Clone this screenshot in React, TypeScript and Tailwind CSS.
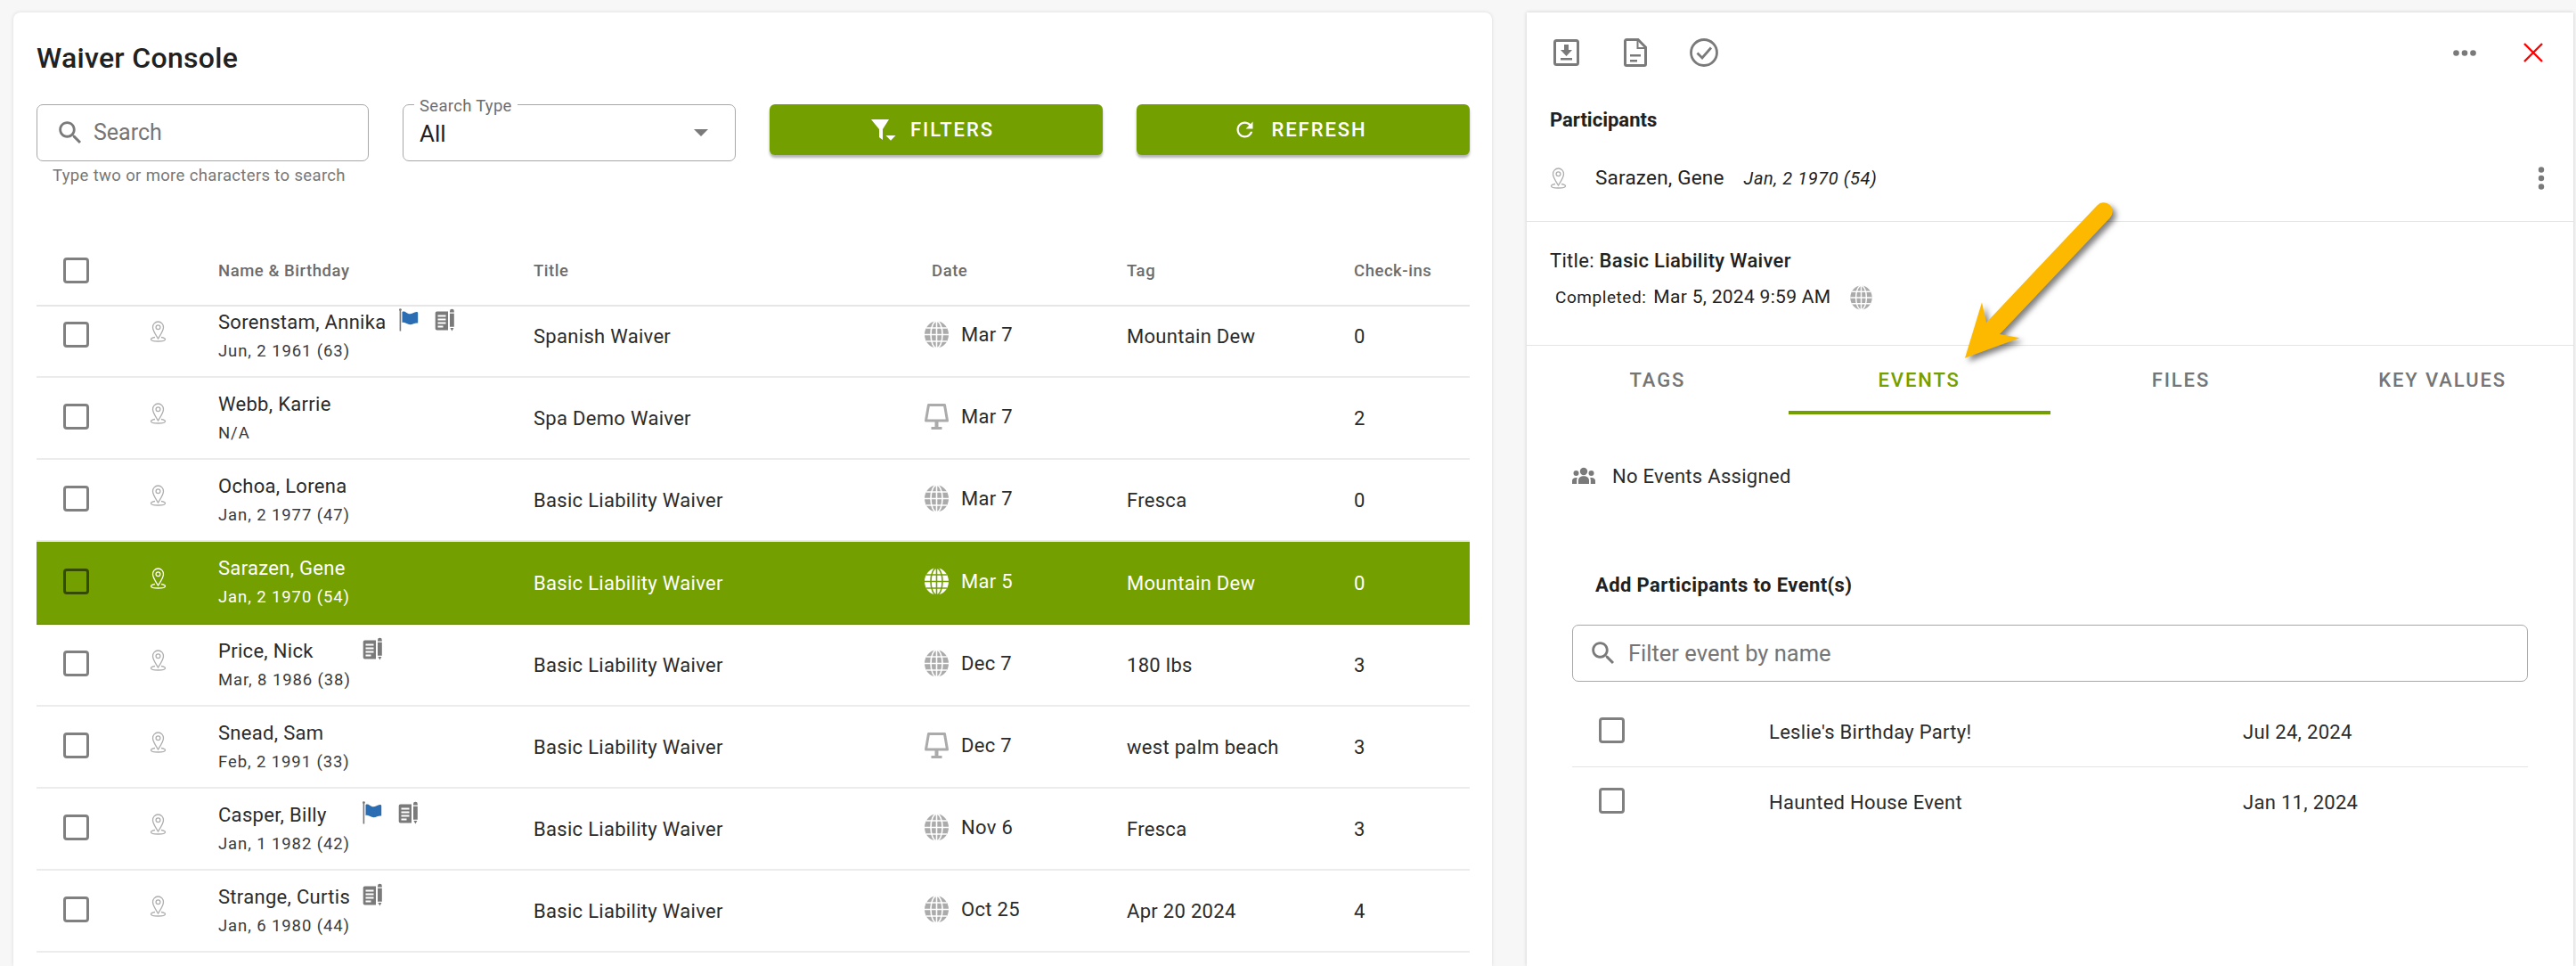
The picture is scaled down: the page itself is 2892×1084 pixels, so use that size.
import type { ReactNode } from "react";

const GRAY = "#7a7a7a";

function Checkbox({ dark }: { dark?: boolean }) {
  return (
    <div
      className={`h-[29px] w-[29px] rounded-[4px] border-[3.5px] ${
        dark ? "border-[#344a00]" : "border-[#808080]"
      }`}
    />
  );
}

function SearchIcon({ size = 34 }: { size?: number }) {
  return (
    <svg width={size} height={size} viewBox="0 0 24 24" fill="#7a7a7a">
      <path d="M15.5 14h-.79l-.28-.27C15.41 12.59 16 11.11 16 9.5 16 5.91 13.09 3 9.5 3S3 5.91 3 9.5 5.91 16 9.5 16c1.61 0 3.09-.59 4.23-1.57l.27.28v.79l5 4.99L20.49 19l-4.99-5zm-6 0C7.01 14 5 11.99 5 9.5S7.01 5 9.5 5 14 7.01 14 9.5 11.99 14 9.5 14z" />
    </svg>
  );
}

function PinIcon({ color = "#aeaeae" }: { color?: string }) {
  return (
    <svg width="19" height="24" viewBox="0 0 19 24" fill="none" stroke={color} strokeWidth="1.3">
      <path d="M9.5 1C6 1 3.500 3.800 3.500 7.300c0 4 3.600 8.700 6 12.700 2.400-4 6-8.700 6-12.700C15.500 3.800 13 1 9.500 1z" />
      <circle cx="9.5" cy="7.3" r="2.4" />
      <path d="M6 18.500C3 19 1.500 19.700 1.500 20.700c0 1.300 3.600 2.300 8 2.300s8-1 8-2.300c0-1-1.500-1.700-4.500-2.200" />
    </svg>
  );
}

function GlobeIcon({ color = "#ababab", line = "#ffffff", w = 27, h = 31 }: { color?: string; line?: string; w?: number; h?: number }) {
  return (
    <svg width={w} height={h} viewBox="0 0 27 31">
      <ellipse cx="13.5" cy="15.5" rx="13.5" ry="15" fill={color} />
      <g fill="none" stroke={line} strokeWidth="1.6">
        <ellipse cx="13.5" cy="15.5" rx="6.5" ry="15" />
        <path d="M13.5 0v31M0 15.5h27M2 8h23M2 23h23" />
      </g>
    </svg>
  );
}

function MonitorIcon() {
  return (
    <svg width="27" height="29" viewBox="0 0 27 29" fill="none">
      <path d="M4.5 1.5h18L25.5 19h-24z" stroke="#ababab" strokeWidth="3" strokeLinejoin="round" />
      <path d="M11.5 20h4v6h4v3h-12v-3h4z" fill="#ababab" />
    </svg>
  );
}

function FlagIcon() {
  return (
    <svg width="24" height="26" viewBox="0 0 24 26">
      <rect x="0.6" y="1.5" width="1.6" height="24" fill="#777" />
      <circle cx="1.4" cy="1.6" r="1.4" fill="#777" />
      <path d="M3.5 4c3.2-1.6 4.8 1.6 7.5 2.2 3.4.7 5.2-2 8.6-2.2.9 0 1.6.3 1.6 1.2v11.4c-3.2-.7-5.5 1.6-8.8 1.6-3.4 0-5.5-3.4-8.9-2.2z" fill="#2a6db3" />
    </svg>
  );
}

function FormIcon() {
  return (
    <svg width="23" height="26" viewBox="0 0 23 26">
      <path d="M2.5 3.5H15V24.5H2.5A1.8 1.8 0 0 1 .7 22.7V5.3a1.8 1.8 0 0 1 1.8-1.8z" fill="#7a7a7a" />
      <rect x="3.5" y="7.5" width="9" height="2" fill="#fff" />
      <rect x="3.5" y="11.5" width="9" height="2" fill="#fff" />
      <rect x="3.5" y="15.5" width="9" height="2" fill="#fff" />
      <rect x="3.5" y="19.5" width="6" height="2" fill="#fff" />
      <path d="M17 3.2a2.4 2.4 0 0 1 4.8 0v1.2H17zM17 5.8h4.8v15H17zM17.4 22h4l-2 3.6z" fill="#7a7a7a" />
    </svg>
  );
}

function FilterIcon() {
  return (
    <svg width="28" height="24" viewBox="0 0 28 24" fill="#fff">
      <path d="M0 0h20l-7 11v12l-4-3v-9z" />
      <path d="M16.5 18h11l-5.500 5.800z" />
    </svg>
  );
}

function RefreshIcon() {
  return (
    <svg width="27" height="27" viewBox="0 0 24 24" fill="#fff">
      <path d="M17.65 6.35C16.2 4.9 14.21 4 12 4c-4.42 0-7.99 3.58-7.99 8s3.57 8 7.99 8c3.73 0 6.84-2.55 7.73-6h-2.08c-.82 2.33-3.04 4-5.65 4-3.31 0-6-2.69-6-6s2.69-6 6-6c1.66 0 3.14.69 4.22 1.78L13 11h7V4l-2.35 2.35z" />
    </svg>
  );
}

function GreenButton({ icon, label, gap }: { icon: ReactNode; label: string; gap: string }) {
  return (
    <div
      className={`flex h-[57px] w-[374px] shrink-0 items-center justify-center rounded-[6px] bg-[#739f00] pr-[8px] text-[22px] font-medium tracking-[1.9px] text-white shadow-[0_3px_3px_rgba(0,0,0,0.3)] ${gap}`}
    >
      {icon}
      <span>{label}</span>
    </div>
  );
}

type Row = {
  name: string;
  birth: string;
  title: string;
  kiosk?: boolean;
  date: string;
  tag: string;
  checks: string;
  flag?: boolean;
  form?: boolean;
  selected?: boolean;
};

const rows: Row[] = [
  { name: "Sorenstam, Annika", birth: "Jun, 2 1961 (63)", title: "Spanish Waiver", date: "Mar 7", tag: "Mountain Dew", checks: "0", flag: true, form: true },
  { name: "Webb, Karrie", birth: "N/A", title: "Spa Demo Waiver", kiosk: true, date: "Mar 7", tag: "", checks: "2" },
  { name: "Ochoa, Lorena", birth: "Jan, 2 1977 (47)", title: "Basic Liability Waiver", date: "Mar 7", tag: "Fresca", checks: "0" },
  { name: "Sarazen, Gene", birth: "Jan, 2 1970 (54)", title: "Basic Liability Waiver", date: "Mar 5", tag: "Mountain Dew", checks: "0", selected: true },
  { name: "Price, Nick", birth: "Mar, 8 1986 (38)", title: "Basic Liability Waiver", date: "Dec 7", tag: "180 lbs", checks: "3", form: true },
  { name: "Snead, Sam", birth: "Feb, 2 1991 (33)", title: "Basic Liability Waiver", kiosk: true, date: "Dec 7", tag: "west palm beach", checks: "3" },
  { name: "Casper, Billy", birth: "Jan, 1 1982 (42)", title: "Basic Liability Waiver", date: "Nov 6", tag: "Fresca", checks: "3", flag: true, form: true },
  { name: "Strange, Curtis", birth: "Jan, 6 1980 (44)", title: "Basic Liability Waiver", date: "Oct 25", tag: "Apr 20 2024", checks: "4", form: true },
];

const COLS = "grid grid-cols-[127px_77px_354px_439px_227px_255px_1fr]";

function WaiverRow({ row }: { row: Row }) {
  const sel = row.selected;
  return (
    <div
      className={`${COLS} ${
        sel ? "h-[93px] border-b border-[#5f8500] bg-[#739f00] text-white" : "h-[92px] border-b-2 border-[#ececec] text-[#2b2b2b]"
      } items-center text-[22px] tracking-[0.3px]`}
    >
      <div className="mb-[4px] pl-[30px]">
        <Checkbox dark={sel} />
      </div>
      <div className="mb-[10px]">
        <PinIcon color={sel ? "#ffffff" : "#aeaeae"} />
      </div>
      <div className="self-start pt-[15px]">
        <div className="flex h-[30px] items-start">
          <span className="mr-[14px] min-w-[148px] leading-[30px]">{row.name}</span>
          <div className="-mt-[1px] flex gap-[16px]">
            {row.flag && <FlagIcon />}
            {row.form && <FormIcon />}
          </div>
        </div>
        <div className={`mt-[2px] text-[18.5px] leading-[30px] tracking-[0.9px] ${sel ? "text-white" : "text-[#3a3a3a]"}`}>{row.birth}</div>
      </div>
      <div>{row.title}</div>
      <div className="mb-[3px] flex items-center gap-[14px]">
        <div className="flex w-[27px] justify-center">
          {row.kiosk ? <MonitorIcon /> : <GlobeIcon color={sel ? "#ffffff" : "#ababab"} line={sel ? "#739f00" : "#ffffff"} />}
        </div>
        <span>{row.date}</span>
      </div>
      <div>{row.tag}</div>
      <div>{row.checks}</div>
    </div>
  );
}

function WaiverConsole() {
  return (
    <div className="flex h-full w-[1660px] shrink-0 flex-col overflow-hidden rounded-t-[8px] bg-white pl-[26px] pr-[25px] shadow-[0_0_4px_rgba(0,0,0,0.12)]">
      <h1 className="mt-[31px] h-[40px] text-[32px] font-medium leading-[40px] tracking-[0.3px] text-[#212121]">Waiver Console</h1>
      <div className="mt-[32px] flex gap-[38px]">
        <div className="w-[373px] shrink-0">
          <div className="flex h-[64px] items-center gap-[9px] rounded-[7px] border-[1.5px] border-[#a8a8a8] pl-[20px]">
            <SearchIcon />
            <span className="text-[25px] text-[#757575]">Search</span>
          </div>
          <div className="mt-[4px] pl-[18px] text-[18.5px] leading-[24px] tracking-[0.35px] text-[#777777]">Type two or more characters to search</div>
        </div>
        <div className="relative flex h-[64px] w-[374px] shrink-0 items-center justify-between rounded-[7px] border-[1.5px] border-[#a8a8a8] pl-[18px] pr-[30px]">
          <span className="absolute -top-[11px] left-[12px] bg-white px-[6px] text-[18.5px] leading-[24px] tracking-[0.3px] text-[#6e6e6e]">Search Type</span>
          <span className="mt-[3px] text-[26px] text-[#212121]">All</span>
          <svg width="16" height="8" viewBox="0 0 16 8" fill={GRAY}>
            <path d="M0 0h16L8 8z" />
          </svg>
        </div>
        <GreenButton icon={<FilterIcon />} label="FILTERS" gap="gap-[16px]" />
        <GreenButton icon={<RefreshIcon />} label="REFRESH" gap="gap-[17px]" />
      </div>
      <div className={`${COLS} mt-[59px] h-[76px] items-center border-b-2 border-[#e6e6e6] text-[18.5px] font-medium tracking-[0.55px] text-[#6c6c6c]`}>
        <div className="mb-[4px] pl-[30px]">
          <Checkbox />
        </div>
        <div />
        <div>Name &amp; Birthday</div>
        <div>Title</div>
        <div className="pl-[8px]">Date</div>
        <div>Tag</div>
        <div>Check-ins</div>
      </div>
      <div className="flex-1 overflow-hidden">
        <div className="-mt-[12px]">
          {rows.map((r) => (
            <WaiverRow key={r.name} row={r} />
          ))}
        </div>
      </div>
    </div>
  );
}

function EventRow({ name, date, last }: { name: string; date: string; last?: boolean }) {
  return (
    <div className={`grid h-[78px] grid-cols-[221px_532px_1fr] items-center text-[22px] tracking-[0.3px] text-[#2b2b2b] ${last ? "" : "border-b border-[#e4e4e4]"}`}>
      <div className="mb-[4px] pl-[30px]">
        <Checkbox />
      </div>
      <div>{name}</div>
      <div>{date}</div>
    </div>
  );
}

function DetailPanel() {
  const tabs = ["TAGS", "EVENTS", "FILES", "KEY VALUES"];
  return (
    <div className="flex h-full min-w-0 flex-1 flex-col bg-white text-[#212121] shadow-[0_0_4px_rgba(0,0,0,0.18)]">
      <div className="flex h-[90px] items-center justify-between pl-[30px] pr-[34px]">
        <div className="flex items-center">
          <svg width="29" height="30" viewBox="0 0 29 30" fill="none">
            <rect x="1.500" y="1.500" width="26" height="27" rx="2" stroke={GRAY} strokeWidth="3" />
            <path d="M12 6h5v6h4l-6.500 7L8 12h4zM8 21h13v2.500H8z" fill={GRAY} />
          </svg>
          <svg className="ml-[50px]" width="26" height="32" viewBox="0 0 26 32" fill="none">
            <path d="M3 1.500h13L24.500 10v19a1.500 1.500 0 0 1-1.500 1.500H3A1.500 1.500 0 0 1 1.500 29V3A1.500 1.500 0 0 1 3 1.500z" stroke={GRAY} strokeWidth="3" />
            <path d="M15.500 2v9h9" stroke={GRAY} strokeWidth="2" />
            <path d="M7 18h12v2.500H7zM7 24h8v2.500H7z" fill={GRAY} />
          </svg>
          <svg className="ml-[48px]" width="32" height="32" viewBox="0 0 32 32" fill="none" stroke={GRAY}>
            <circle cx="16" cy="16" r="14.500" strokeWidth="2.800" />
            <path d="M8.500 16.500l5.500 5.500L24 10.500" strokeWidth="2.800" />
          </svg>
        </div>
        <div className="flex items-center gap-[53px]">
          <svg width="26" height="7" viewBox="0 0 26 7" fill={GRAY}>
            <circle cx="3.500" cy="3.500" r="3.300" />
            <circle cx="13" cy="3.500" r="3.300" />
            <circle cx="22.500" cy="3.500" r="3.300" />
          </svg>
          <svg width="22" height="22" viewBox="0 0 22 22" stroke="#ff0000" strokeWidth="2.400">
            <path d="M1 1l20 20M21 1L1 21" />
          </svg>
        </div>
      </div>
      <div className="mt-[16px] h-[30px] pl-[26px] text-[22px] font-bold leading-[30px]">Participants</div>
      <div className="mt-[26px] flex h-[48px] items-center pl-[26px] pr-[32px]">
        <PinIcon />
        <span className="ml-[32px] text-[22.5px] tracking-[0.2px]">Sarazen, Gene</span>
        <span className="ml-[22px] text-[20px] italic tracking-[0.6px]">Jan, 2 1970 (54)</span>
        <svg className="ml-auto" width="8" height="26" viewBox="0 0 8 26" fill={GRAY}>
          <circle cx="4" cy="3.500" r="3.200" />
          <circle cx="4" cy="13" r="3.200" />
          <circle cx="4" cy="22.500" r="3.200" />
        </svg>
      </div>
      <div className="mt-[24px] h-[140px] border-y border-[#e4e4e4] pl-[26px]">
        <div className="mt-[29px] h-[30px] text-[22px] leading-[30px] tracking-[0.3px]">
          Title: <span className="font-medium">Basic Liability Waiver</span>
        </div>
        <div className="ml-[6px] mt-[11px] flex h-[30px] items-center">
          <span className="text-[19px] tracking-[0.55px]">Completed:</span>
          <span className="ml-[8px] text-[21px] tracking-[0.3px]">Mar 5, 2024 9:59 AM</span>
          <div className="ml-[22px]">
            <GlobeIcon w={25} h={28} />
          </div>
        </div>
      </div>
      <div className="grid h-[77px] grid-cols-4">
        {tabs.map((t) => (
          <div
            key={t}
            className={`flex items-center justify-center border-b-4 pt-[3px] text-[22px] font-medium tracking-[1.9px] ${
              t === "EVENTS" ? "border-[#739f00] text-[#739f00]" : "border-transparent text-[#757575]"
            }`}
          >
            {t}
          </div>
        ))}
      </div>
      <div className="pl-[51px] pr-[51px]">
        <div className="mt-[54px] flex h-[30px] items-center gap-[19px] text-[22px] tracking-[0.3px] text-[#2b2b2b]">
          <svg width="26" height="20" viewBox="0 0 26 20" fill={GRAY}>
            <circle cx="13" cy="5" r="4.200" />
            <circle cx="4.500" cy="7" r="3" />
            <circle cx="21.500" cy="7" r="3" />
            <path d="M7 19v-4c0-3 2.600-4.800 6-4.800s6 1.800 6 4.800v4zM0 19v-3.500c0-2.200 1.800-3.400 4.600-3.400.4 0 .8 0 1.200.1-.4.800-.6 1.700-.6 2.800v4zM26 19v-3.500c0-2.200-1.800-3.400-4.600-3.400-.4 0-.8 0-1.200.1.400.8.600 1.700.6 2.800v4z" />
          </svg>
          <span>No Events Assigned</span>
        </div>
        <div className="ml-[26px] mt-[93px] h-[30px] text-[22px] font-bold leading-[30px] tracking-[0.4px] text-[#212121]">Add Participants to Event(s)</div>
        <div className="mt-[29px] flex h-[64px] items-center gap-[11px] rounded-[7px] border-[1.5px] border-[#a8a8a8] pl-[17px]">
          <SearchIcon />
          <span className="text-[25.5px] text-[#757575]">Filter event by name</span>
        </div>
        <div className="mt-[18px]">
          <EventRow name="Leslie's Birthday Party!" date="Jul 24, 2024" />
          <EventRow name="Haunted House Event" date="Jan 11, 2024" last />
        </div>
      </div>
    </div>
  );
}

export default function App() {
  return (
    <div className="relative flex h-[1084px] w-[2892px] gap-[39px] overflow-hidden bg-[#f7f7f7] pl-[15px] pr-[3px] pt-[14px] font-[Roboto,sans-serif]">
      <WaiverConsole />
      <DetailPanel />
      <svg
        className="absolute left-[2190px] top-[220px] drop-shadow-[4px_4px_3px_rgba(0,0,0,0.5)]"
        width="190"
        height="200"
        viewBox="0 0 190 200"
      >
        <path d="M171.700 17.300L48 148" stroke="#fdb900" strokeWidth="20" strokeLinecap="round" />
        <path d="M16 181.700L35 119.300L40 141.700L55 155L77.300 159.300z" fill="#fdb900" />
      </svg>
    </div>
  );
}
